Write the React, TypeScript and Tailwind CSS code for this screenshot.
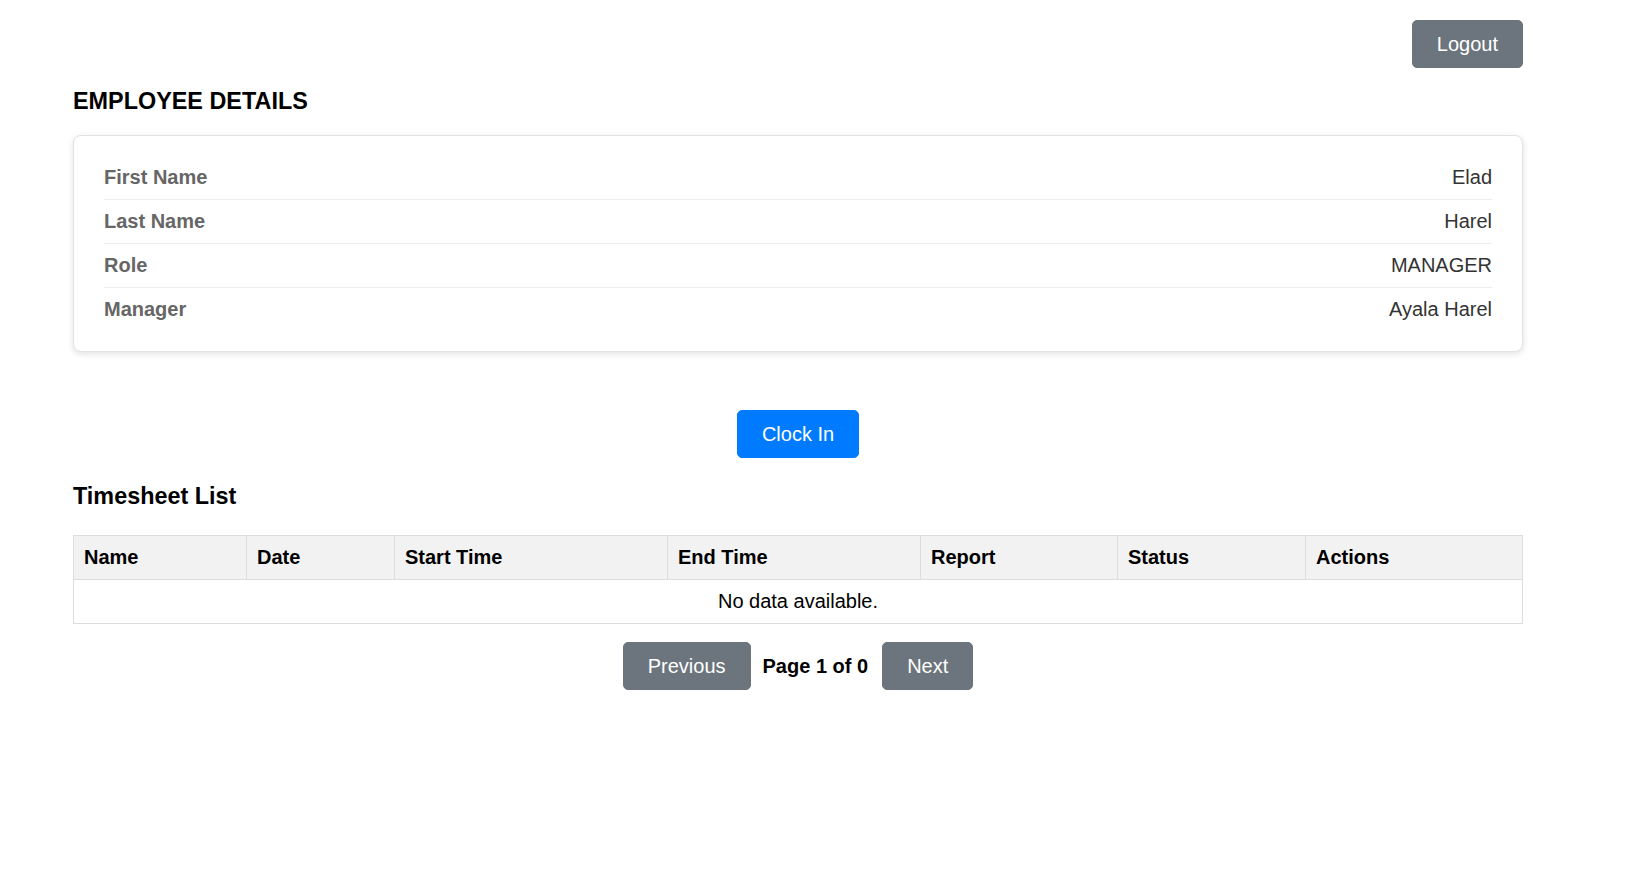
import React from "react";

const rows: [string, string][] = [
  ["First Name", "Elad"],
  ["Last Name", "Harel"],
  ["Role", "MANAGER"],
  ["Manager", "Ayala Harel"],
];

const cols: [string, number][] = [
  ["Name", 173],
  ["Date", 148],
  ["Start Time", 273],
  ["End Time", 253],
  ["Report", 197],
  ["Status", 188],
  ["Actions", 217],
];

export default function App() {
  return (
    <div
      className="min-h-[870px] w-full bg-white text-[20px] text-black"
      style={{ fontFamily: '"Liberation Sans", Arial, sans-serif' }}
    >
      <div className="ml-[73px] w-[1450px] pt-[20px]">
        <div className="flex justify-end">
          <button className="h-[48px] rounded-[5px] border border-[#6c757d] bg-[#6c757d] px-[24px] pb-[1px] text-[20px] leading-[24px] text-white">
            Logout
          </button>
        </div>

        <h3 className="mt-[20px] text-[23.4px] font-bold leading-[26px] text-black">
          EMPLOYEE DETAILS
        </h3>

        <div className="mt-[21px] rounded-[8px] border border-[#e2e2e2] bg-white px-[30px] pb-[20px] pt-[20px] shadow-[0_2px_6px_rgba(0,0,0,0.12)]">
          {rows.map(([label, value], i) => (
            <div
              key={label}
              className={
                "flex items-center justify-between py-[10px] leading-[23px] " +
                (i < rows.length - 1 ? "border-b border-[#ececec]" : "")
              }
            >
              <span className="font-bold text-[#666666]">{label}</span>
              <span className="text-[#333333]">{value}</span>
            </div>
          ))}
        </div>

        <div className="mt-[58px] flex justify-center">
          <button className="h-[48px] rounded-[5px] border border-[#007bff] bg-[#007bff] px-[24px] pb-[1px] text-[20px] leading-[24px] text-white">
            Clock In
          </button>
        </div>

        <h3 className="mt-[25px] text-[23.4px] font-bold leading-[26px] text-black">
          Timesheet List
        </h3>

        <table className="mt-[26px] w-[1449px] table-fixed border-collapse border border-[#dddddd]">
          <colgroup>
            {cols.map(([name, w]) => (
              <col key={name} style={{ width: w }} />
            ))}
          </colgroup>
          <thead>
            <tr className="bg-[#f2f2f2]">
              {cols.map(([name]) => (
                <th
                  key={name}
                  className="border border-[#dddddd] px-[10px] py-[10px] text-left text-[20px] font-bold leading-[23px] text-black"
                >
                  {name}
                </th>
              ))}
            </tr>
          </thead>
          <tbody>
            <tr>
              <td
                colSpan={7}
                className="border border-[#dddddd] px-[10px] py-[10px] text-center text-[20px] leading-[23px] text-black"
              >
                No data available.
              </td>
            </tr>
          </tbody>
        </table>

        <div className="mt-[18px] flex items-center justify-center">
          <button className="h-[48px] rounded-[5px] border border-[#6c757d] bg-[#6c757d] px-[24px] pb-[1px] text-[20px] leading-[24px] text-white">
            Previous
          </button>
          <span className="ml-[12px] mr-[14px] font-bold text-black">Page 1 of 0</span>
          <button className="h-[48px] rounded-[5px] border border-[#6c757d] bg-[#6c757d] px-[24px] pb-[1px] text-[20px] leading-[24px] text-white">
            Next
          </button>
        </div>
      </div>
    </div>
  );
}
